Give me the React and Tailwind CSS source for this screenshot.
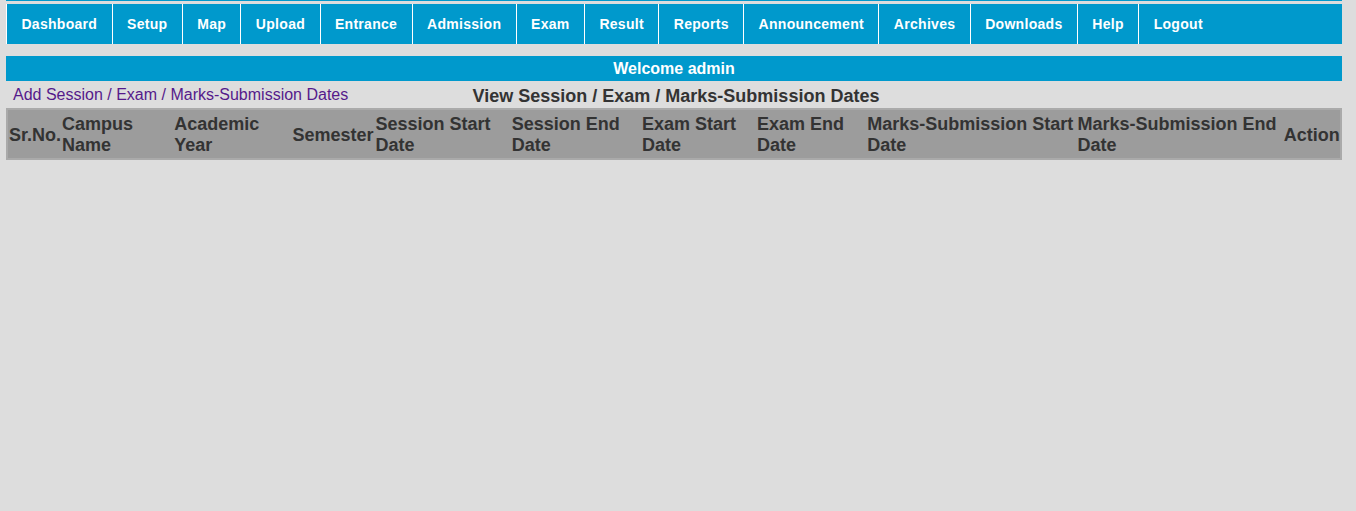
import React from 'react';

const menu = [
  'Dashboard', 'Setup', 'Map', 'Upload', 'Entrance', 'Admission', 'Exam',
  'Result', 'Reports', 'Announcement', 'Archives', 'Downloads', 'Help', 'Logout',
];

const cols = [
  { label: 'Sr.No.', w: 54 },
  { label: 'Campus Name', w: 112 },
  { label: 'Academic Year', w: 118 },
  { label: 'Semester', w: 83 },
  { label: 'Session Start Date', w: 136 },
  { label: 'Session End Date', w: 130 },
  { label: 'Exam Start Date', w: 115 },
  { label: 'Exam End Date', w: 110 },
  { label: 'Marks-Submission Start Date', w: 210 },
  { label: 'Marks-Submission End Date', w: 206 },
  { label: 'Action', w: 58 },
];

export default function App() {
  return (
    <div className="min-h-[511px] bg-[#dddddd] font-['Liberation_Sans',Arial,sans-serif]">
      <div className="ml-[6px] w-[1336px]">
        {/* top menu */}
        <div className="border-t border-[#0099cc] pt-[3px]">
          <ul className="flex h-[40px] bg-[#0099cc]">
            {menu.map(m => (
              <li
                key={m}
                className="flex items-center border-l border-white px-[14.4px] text-[14px] font-bold tracking-[0.3px] text-white"
              >
                {m}
              </li>
            ))}
          </ul>
        </div>

        <div className="mt-[12px] flex h-[25px] items-center justify-center bg-[#0099cc] text-[16px] font-bold text-white">
          Welcome admin
        </div>

        <div className="grid h-[27px] grid-cols-[1fr_auto_1fr] items-center">
          <a href="#" className="pl-[7px] pb-[2px] text-[16px] text-[#551a8b] whitespace-nowrap">
            Add Session / Exam / Marks-Submission Dates
          </a>
          <h2 className="pt-[2px] pl-[4px] text-[18px] font-bold text-[#333333]">
            View Session / Exam / Marks-Submission Dates
          </h2>
          <div />
        </div>

        <table className="w-full table-fixed border-collapse border-2 border-[#aaaaaa] bg-[#9c9c9c]">
          <colgroup>
            {cols.map(c => (
              <col key={c.label} style={{ width: c.w }} />
            ))}
          </colgroup>
          <thead>
            <tr>
              {cols.map(c => (
                <th
                  key={c.label}
                  className="px-[1px] pt-[4px] pb-[2px] text-left align-middle text-[18px] leading-[21px] font-bold text-[#333333]"
                >
                  {c.label}
                </th>
              ))}
            </tr>
          </thead>
        </table>
      </div>
    </div>
  );
}
